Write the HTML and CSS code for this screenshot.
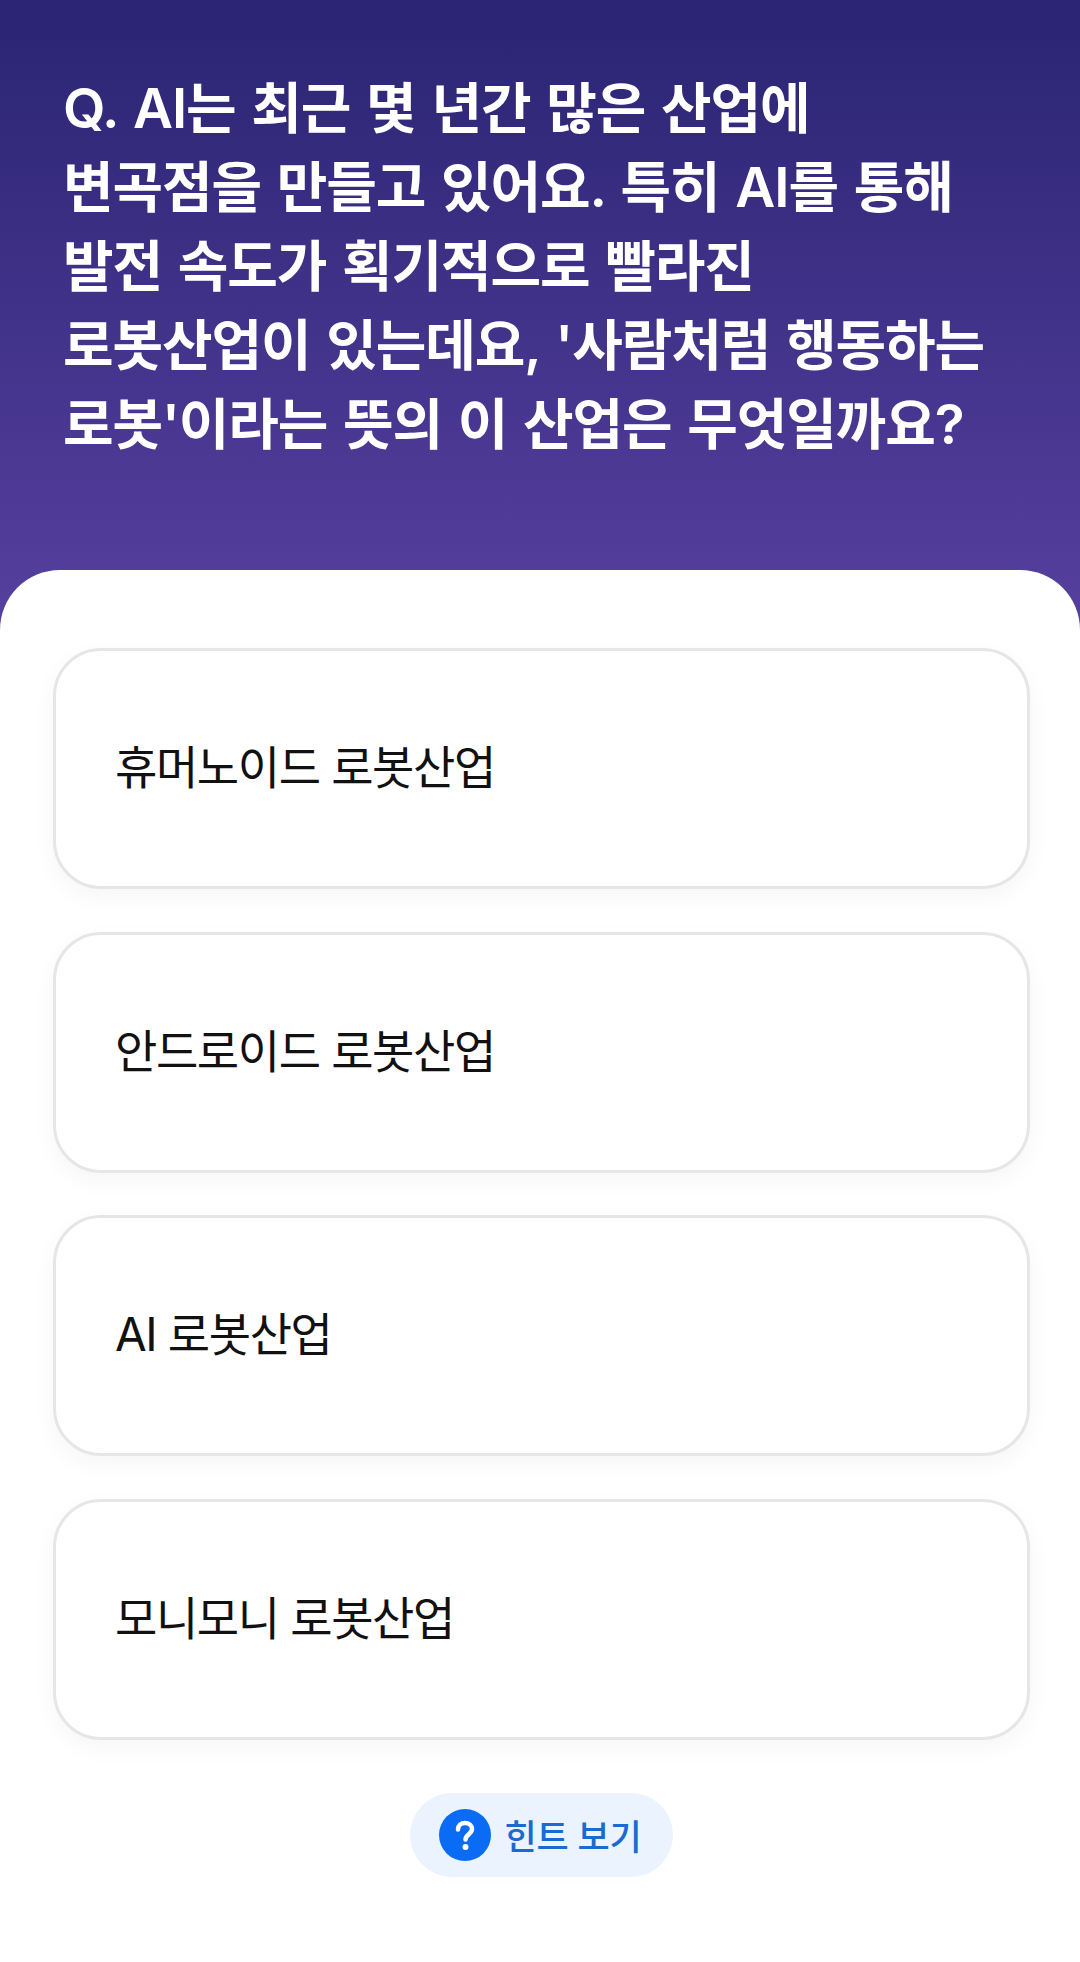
FILE: index.html
```html
<!DOCTYPE html>
<html lang="ko">
<head>
    <meta charset="UTF-8">
    <meta name="viewport" content="width=device-width, initial-scale=1.0">
    <title>퀴즈</title>
    <link rel="stylesheet" href="styles.css">
</head>
<body>
<header class="question">
    <h1>Q. AI는 최근 몇 년간 많은 산업에<br>변곡점을 만들고 있어요. 특히 AI를 통해<br>발전 속도가 획기적으로 빨라진<br>로봇산업이 있는데요, '사람처럼 행동하는<br>로봇'이라는 뜻의 이 산업은 무엇일까요?</h1>
</header>
<main class="sheet">
    <ul class="choices">
        <li class="choice">휴머노이드 로봇산업</li>
        <li class="choice">안드로이드 로봇산업</li>
        <li class="choice">AI 로봇산업</li>
        <li class="choice">모니모니 로봇산업</li>
    </ul>
    <button class="hint" type="button">
        <svg class="hint-icon" viewBox="0 0 52 52" aria-hidden="true">
            <circle cx="26" cy="26" r="26" fill="#0a6cf5"/>
            <path d="M19 20.500c0-4 3-6.500 7-6.500s7 2.500 7 6c0 5-6.500 5.500-6.500 10.500" fill="none" stroke="#fff" stroke-width="4.500" stroke-linecap="round"/>
            <circle cx="26.500" cy="38" r="3" fill="#fff"/>
        </svg>
        <span>힌트 보기</span>
    </button>
</main>
</body>
</html>
```

FILE: styles.css
```css
* {
    box-sizing: border-box;
}

body {
    margin: 0;
    width: 1080px;
    height: 1962px;
    overflow: hidden;
    font-family: 'Inter', 'Noto Sans CJK KR', sans-serif;
    background: #ffffff;
}

/* Top question area */
.question {
    height: 630px;
    padding: 69px 50px 0 63px;
    background: linear-gradient(to bottom, #2a2473, #57409f);
}

.question h1 {
    margin: 0;
    font-size: 55px;
    line-height: 79px;
    font-weight: 600;
    letter-spacing: -1.1px;
    word-spacing: 3px;
    color: #ffffff;
    white-space: nowrap;
}

/* White sheet */
.sheet {
    display: flex;
    flex-direction: column;
    align-items: center;
    height: 1392px;
    margin-top: -60px;
    padding: 78px 50px 0 53px;
    background: #ffffff;
    border-radius: 60px 60px 0 0;
}

.choices {
    display: flex;
    flex-direction: column;
    gap: 42.67px;
    width: 100%;
    margin: 0;
    padding: 0;
    list-style: none;
}

.choice {
    display: flex;
    align-items: center;
    height: 241px;
    padding: 0 59px 9px;
    font-size: 46px;
    font-weight: 400;
    letter-spacing: -1.4px;
    color: #111111;
    background: #ffffff;
    border: 3px solid #e6e6e6;
    border-radius: 48px;
    box-shadow: 0 8px 24px rgba(0, 0, 0, 0.04);
}

.hint {
    display: flex;
    align-items: center;
    gap: 13px;
    height: 84px;
    margin-top: 53px;
    padding: 0 31px 0 29px;
    font-family: inherit;
    font-size: 35px;
    font-weight: 500;
    letter-spacing: -0.2px;
    color: #1a6ad2;
    background: #ebf3fe;
    border: 0;
    border-radius: 42px;
}

.hint-icon {
    width: 52px;
    height: 52px;
}
```
